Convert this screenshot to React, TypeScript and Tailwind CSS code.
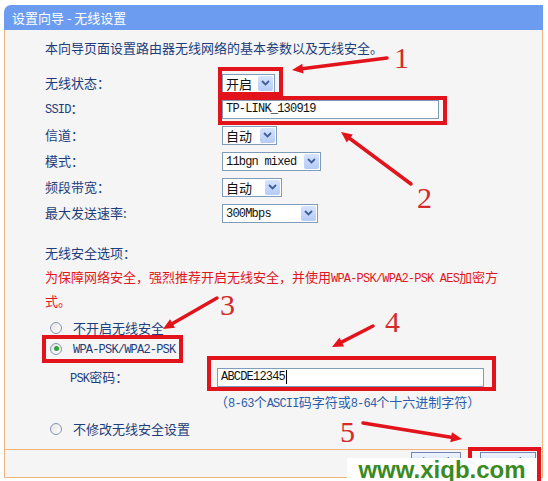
import React from 'react';

const M = ({ children }: { children: React.ReactNode }) => (
  <span className="font-['Liberation_Mono',monospace] text-[12px] tracking-[-0.8px]">{children}</span>
);

const Chevron = () => (
  <svg width="9" height="6" viewBox="0 0 9 6">
    <path d="M1 1 L4.5 4.5 L8 1" fill="none" stroke="#3f5f98" strokeWidth="1.8" />
  </svg>
);

function Select({ value, w }: { value: React.ReactNode; w: string }) {
  return (
    <div className={`flex h-[19px] items-center border border-[#7f9db9] bg-white ${w}`}>
      <span className="flex-1 pl-[3px] leading-[17px] text-[#111]">{value}</span>
      <span className="mr-[1px] flex h-[15px] w-[15px] items-center justify-center rounded-[2px] bg-gradient-to-b from-[#d6e3fe] to-[#b5cbf6]">
        <Chevron />
      </span>
    </div>
  );
}

function Radio({ checked }: { checked?: boolean }) {
  return (
    <span className="flex h-[12px] w-[12px] items-center justify-center rounded-full border border-[#8596b0] bg-gradient-to-br from-[#e3e3e3] to-white">
      {checked && <span className="h-[5px] w-[5px] rounded-full bg-[#2fa33a]" />}
    </span>
  );
}

const rows: { label: React.ReactNode; control: React.ReactNode }[] = [
  { label: '无线状态：', control: <Select value="开启" w="w-[53px]" /> },
  {
    label: <><M>SSID</M>：</>,
    control: (
      <div className="flex h-[19px] w-[217px] items-center border border-[#7f9db9] bg-white pl-[3px] text-[#111]">
        <M>TP-LINK_130919</M>
      </div>
    ),
  },
  { label: '信道：', control: <Select value="自动" w="w-[55px]" /> },
  { label: '模式：', control: <Select value={<M>11bgn mixed</M>} w="w-[99px]" /> },
  { label: '频段带宽：', control: <Select value="自动" w="w-[60px]" /> },
  { label: '最大发送速率:', control: <Select value={<M>300Mbps</M>} w="w-[96px]" /> },
];

// red annotation arrows: [fromX, fromY, tipX, tipY]
const arrows = [
  [387, 58, 292, 70],
  [411, 184, 341, 132],
  [217, 298, 163, 329],
  [373, 326, 332, 347],
  [363, 423, 462, 439],
];

function arrowHead(x1: number, y1: number, x2: number, y2: number) {
  const dx = x2 - x1;
  const dy = y2 - y1;
  const len = Math.hypot(dx, dy);
  const ux = dx / len;
  const uy = dy / len;
  const bx = x2 - ux * 11;
  const by = y2 - uy * 11;
  return `${x2},${y2} ${bx - uy * 5},${by + ux * 5} ${bx + uy * 5},${by - ux * 5}`;
}

export default function App() {
  return (
    <div className="relative h-[481px] w-[548px] overflow-hidden bg-white pl-[4px] pt-[5px] font-['Noto_Sans_CJK_SC',sans-serif] text-[13px]">
      <div className="w-[539px]">
        <div className="flex h-[25px] items-center rounded-tl-[7px] bg-[#6b9cf0] pl-[8px] text-[13px] text-white">
          设置向导 - 无线设置
        </div>

        <div className="h-[419px] border-x border-[#f0b47c] bg-[#f5f5f5] pl-[40px] pt-[9px] text-[#1e3d7a]">
          <div className="h-[18px] leading-[18px]">本向导页面设置路由器无线网络的基本参数以及无线安全。</div>

          <div className="mt-[13px]">
            {rows.map((r, i) => (
              <div key={i} className="flex h-[26px] items-center">
                <div className="w-[177px] leading-[18px]">{r.label}</div>
                {r.control}
              </div>
            ))}
          </div>

          <div className="mt-[18px] h-[18px] leading-[18px]">无线安全选项：</div>
          <div className="mt-[4px] leading-[21px] text-[#e3151c]">
            为保障网络安全，强烈推荐开启无线安全，并使用<M>WPA-PSK/WPA2-PSK AES</M>加密方
            <br />
            式。
          </div>

          <div className="mt-[6px]">
            <div className="flex h-[21px] items-center pl-[5px]">
              <Radio />
              <span className="ml-[11px]">不开启无线安全</span>
            </div>
            <div className="flex h-[21px] items-center pl-[5px]">
              <Radio checked />
              <span className="ml-[11px]">
                <M>WPA-PSK/WPA2-PSK</M>
              </span>
            </div>
          </div>

          <div className="mt-[8px] flex h-[20px] items-center pl-[25px]">
            <div className="w-[147px]">
              <M>PSK</M>密码：
            </div>
            <div className="flex h-[19px] w-[267px] items-center border border-[#7f9db9] bg-white pl-[3px] text-[#111]">
              <M>ABCDE12345</M>
              <span className="ml-[1px] h-[14px] w-[1px] bg-black" />
            </div>
          </div>

          <div className="mt-[5px] h-[20px] pl-[170px] leading-[20px] text-[#2a5caa]">
            （<M>8-63</M>个<M>ASCII</M>码字符或<M>8-64</M>个十六进制字符）
          </div>

          <div className="mt-[6px] flex h-[21px] items-center pl-[5px]">
            <Radio />
            <span className="ml-[11px]">不修改无线安全设置</span>
          </div>
        </div>

        <div className="flex h-[29px] justify-end gap-[19px] border border-[#f0b47c] bg-[#f5f5f5] pr-[6px] pt-[2px]">
          <button className="h-[22px] w-[50px] border border-[#6f86b4] bg-gradient-to-b from-[#eef3fd] to-[#c9d8f5] text-[12px] leading-[12px] text-[#1e3d7a]">
            上一步
          </button>
          <button className="h-[22px] w-[56px] border border-[#6f86b4] bg-gradient-to-b from-[#eef3fd] to-[#c9d8f5] text-[12px] leading-[12px] text-[#1e3d7a]">
            下一步
          </button>
        </div>
      </div>

      <svg className="pointer-events-none absolute left-0 top-0" width="548" height="481">
        <g fill="none" stroke="#e3131b" strokeWidth="4">
          <rect x="220" y="69" width="61" height="25" />
          <rect x="220" y="98" width="225" height="25" />
          <rect x="44" y="337" width="137" height="24" />
          <rect x="209" y="358" width="285" height="31" />
          <rect x="470" y="449" width="69" height="34" />
        </g>
        {arrows.map(([x1, y1, x2, y2], i) => {
          const len = Math.hypot(x2 - x1, y2 - y1);
          const ex = x2 - ((x2 - x1) / len) * 8;
          const ey = y2 - ((y2 - y1) / len) * 8;
          return (
            <g key={i}>
              <line x1={x1} y1={y1} x2={ex} y2={ey} stroke="#e3131b" strokeWidth="3.5" strokeLinecap="round" />
              <polygon points={arrowHead(x1, y1, x2, y2)} fill="#e3131b" />
            </g>
          );
        })}
      </svg>

      <span className="absolute left-[394px] top-[43px] font-['Liberation_Serif',serif] text-[30px] leading-none text-[#d42a2a]">1</span>
      <span className="absolute left-[417px] top-[183px] font-['Liberation_Serif',serif] text-[30px] leading-none text-[#d42a2a]">2</span>
      <span className="absolute left-[220px] top-[290px] font-['Liberation_Serif',serif] text-[30px] leading-none text-[#d42a2a]">3</span>
      <span className="absolute left-[385px] top-[307px] font-['Liberation_Serif',serif] text-[30px] leading-none text-[#d42a2a]">4</span>
      <span className="absolute left-[340px] top-[417px] font-['Liberation_Serif',serif] text-[30px] leading-none text-[#d42a2a]">5</span>

      <div className="absolute left-[347px] top-[458px] flex h-[23px] w-[190px] items-center justify-center bg-white font-['Liberation_Sans',sans-serif] text-[24px] font-bold leading-none text-[#3a8a1f]">
        www.xiqb.com
      </div>
    </div>
  );
}
